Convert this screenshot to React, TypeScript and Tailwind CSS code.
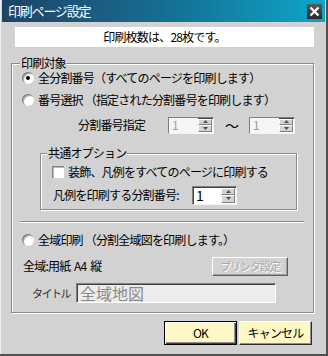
import React from "react"

const FONT = "font-['Noto_Sans_CJK_JP','Noto_Sans',sans-serif]"

// Classic radio: sunken circle, optional dot
function Radio({ checked }: { checked?: boolean }) {
    return (
        <div className="relative w-[12px] h-[12px] rounded-full bg-white shadow-[inset_1px_1px_0_#808080,inset_2px_2px_1px_#b0b0b0] shrink-0">
            {checked && <div className="absolute left-[4px] top-[4px] w-[4px] h-[4px] rounded-full bg-black" />}
        </div>
    )
}

function Arrow({ up }: { up?: boolean }) {
    return (
        <div className="flex-1 flex items-center justify-center bg-[#d4d4d4] border-t border-l border-t-white border-l-white border-b border-r border-b-[#808080] border-r-[#808080]">
            <svg width="5" height="3" viewBox="0 0 5 3">
                <polygon points={up ? "2.5,0 5,3 0,3" : "0,0 5,0 2.5,3"} fill="#505050" />
            </svg>
        </div>
    )
}

type SpinProps = { value: string; disabled?: boolean; size: string; text: string }

// Number field with up/down buttons
function Spin({ value, disabled, size, text }: SpinProps) {
    return (
        <div className={`flex ${size} bg-white border border-t-[#808080] border-l-[#808080] border-b-[#f4f4f4] border-r-[#f4f4f4] shadow-[inset_1px_1px_0_#404040]`}>
            <div className={`flex-1 flex items-center pl-[3px] ${text} ${disabled ? "text-[#a0a0a0] bg-[#f6f6f6]" : "text-black"}`}>{value}</div>
            <div className="w-[15px] flex flex-col pt-[1px] pb-[1px] pr-[1px]">
                <Arrow up />
                <Arrow />
            </div>
        </div>
    )
}

function WinButton({ label, isDefault }: { label: string; isDefault?: boolean }) {
    return (
        <button
            className={`w-[73px] h-[24px] bg-[#fff8c6] text-[12px] text-black flex items-center justify-center border ${
                isDefault
                    ? "border-black shadow-[inset_1px_1px_0_white,inset_-1px_-1px_0_#404040,inset_-2px_-2px_0_#909090]"
                    : "border-t-white border-l-white border-b-[#303030] border-r-[#303030] shadow-[inset_-1px_-1px_0_#909090]"
            }`}
        >
            {label}
        </button>
    )
}

export default function App() {
    return (
        <div className={`${FONT} w-[328px] h-[356px] bg-[#d2d2d2] text-[12px] tracking-[-0.8px] whitespace-nowrap text-black border-r-2 border-b-2 border-r-[#505050] border-b-[#505050] shadow-[inset_1px_1px_0_#f0f0f0] pl-[2px] overflow-hidden`}>
            {/* Title bar */}
            <div className="h-[22px] w-[323px] flex items-center justify-between bg-gradient-to-r from-[#1d4468] via-[#146e92] to-[#0aa6c8] pl-[6px] pr-[3px]">
                <span className="text-white text-[13px] tracking-[-1.2px]">印刷ページ設定</span>
                <div className="w-[15px] h-[15px] bg-gradient-to-b from-[#5a5a5a] to-[#2a2a2a] flex items-center justify-center">
                    <svg width="11" height="11" viewBox="0 0 11 11">
                        <path d="M1.5 1.5 L9.5 9.5 M9.5 1.5 L1.5 9.5" stroke="white" strokeWidth="2.2" />
                    </svg>
                </div>
            </div>

            {/* Page count */}
            <div className="ml-[13px] mt-[5px] w-[299px] h-[20px] bg-white flex items-center justify-center">
                印刷枚数は、28枚です。
            </div>

            {/* Print target group */}
            <div className="relative ml-[9px] mt-[16px] w-[303px] h-[250px] border border-[#8a8a8a] shadow-[inset_1px_1px_0_white,1px_1px_0_white]">
                <span className="absolute -top-[7px] left-[8px] bg-[#d2d2d2] px-[1px] leading-[12px]">印刷対象</span>

                <div className="mt-[4px] h-[20px] flex items-center pl-[10px] gap-[4px]">
                    <Radio checked />
                    <span>全分割番号（すべてのページを印刷します）</span>
                </div>
                <div className="mt-[2px] h-[20px] flex items-center pl-[10px] gap-[4px]">
                    <Radio />
                    <span>番号選択 （指定された分割番号を印刷します）</span>
                </div>
                <div className="mt-[5px] h-[20px] flex items-center pl-[66px]">
                    <span className="w-[90px]">分割番号指定</span>
                    <Spin value="1" disabled size="w-[46px] h-[17px]" text="text-[12px]" />
                    <span className="w-[35px] text-center text-[14px]">〜</span>
                    <Spin value="1" disabled size="w-[46px] h-[17px]" text="text-[12px]" />
                </div>

                {/* Common options */}
                <div className="relative ml-[28px] mt-[18px] w-[257px] h-[57px] border border-[#8a8a8a] shadow-[inset_1px_1px_0_white,1px_1px_0_white]">
                    <span className="absolute -top-[7px] left-[6px] bg-[#d2d2d2] px-[1px] leading-[12px]">共通オプション</span>
                    <div className="mt-[8px] h-[20px] flex items-center pl-[11px] gap-[4px]">
                        <div className="w-[12px] h-[12px] bg-white shadow-[inset_1px_1px_0_#808080,inset_2px_2px_0_#b8b8b8] shrink-0" />
                        <span>装飾、凡例をすべてのページに印刷する</span>
                    </div>
                    <div className="mt-[3px] h-[20px] flex items-center pl-[12px]">
                        <span className="w-[139px]">凡例を印刷する分割番号:</span>
                        <Spin value="1" size="w-[45px] h-[19px]" text="text-[14px]" />
                    </div>
                </div>

                {/* Separator */}
                <div className="ml-[8px] mt-[11px] w-[284px] h-[2px] border-t border-t-[#8a8a8a] border-b border-b-white" />

                <div className="mt-[7px] h-[20px] flex items-center pl-[10px] gap-[4px]">
                    <Radio />
                    <span>全域印刷 （分割全域図を印刷します。）</span>
                </div>
                <div className="mt-[6px] h-[20px] flex items-center pl-[11px]">
                    <span className="w-[189px] whitespace-pre">全域:用紙  A4  縦</span>
                    <div className="w-[76px] h-[19px] flex items-center justify-center bg-[#d2d2d2] text-[11px] tracking-[-1px] text-[#a8a8a8] [text-shadow:1px_1px_0_white] border border-t-white border-l-white border-b-[#606060] border-r-[#606060] shadow-[inset_-1px_-1px_0_#a0a0a0]">
                        プリンタ設定
                    </div>
                </div>
                <div className="mt-[7px] h-[20px] flex items-center pl-[20px]">
                    <span className="w-[44px] text-[11px] text-[#303030] tracking-[-1.5px]">タイトル</span>
                    <div className="w-[200px] h-[20px] flex items-center pl-[3px] bg-[#ececec] text-[#8a8a8a] text-[16px] tracking-[0px] border border-t-[#808080] border-l-[#808080] border-b-white border-r-white shadow-[inset_1px_1px_0_#404040]">
                        全域地図
                    </div>
                </div>
            </div>

            {/* Dialog buttons */}
            <div className="mt-[8px] flex justify-end gap-[2px] pr-[14px]">
                <WinButton label="OK" isDefault />
                <WinButton label="キャンセル" />
            </div>
        </div>
    )
}
